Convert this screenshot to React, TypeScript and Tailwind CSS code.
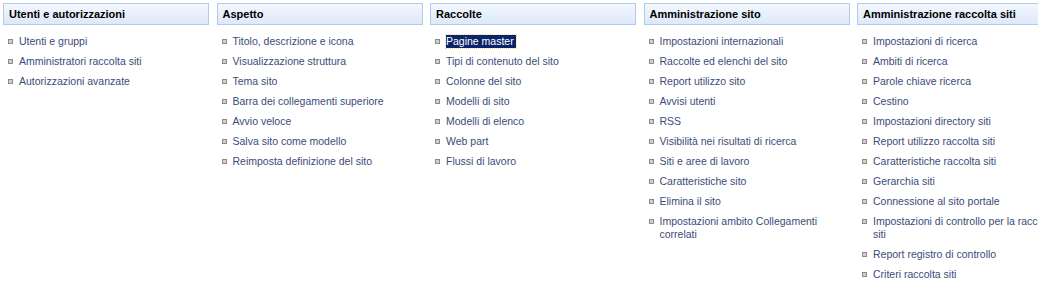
const sections: { title: string; links: string[] }[] = [
  {
    title: "Utenti e autorizzazioni",
    links: ["Utenti e gruppi", "Amministratori raccolta siti", "Autorizzazioni avanzate"],
  },
  {
    title: "Aspetto",
    links: [
      "Titolo, descrizione e icona",
      "Visualizzazione struttura",
      "Tema sito",
      "Barra dei collegamenti superiore",
      "Avvio veloce",
      "Salva sito come modello",
      "Reimposta definizione del sito",
    ],
  },
  {
    title: "Raccolte",
    links: [
      "Pagine master",
      "Tipi di contenuto del sito",
      "Colonne del sito",
      "Modelli di sito",
      "Modelli di elenco",
      "Web part",
      "Flussi di lavoro",
    ],
  },
  {
    title: "Amministrazione sito",
    links: [
      "Impostazioni internazionali",
      "Raccolte ed elenchi del sito",
      "Report utilizzo sito",
      "Avvisi utenti",
      "RSS",
      "Visibilità nei risultati di ricerca",
      "Siti e aree di lavoro",
      "Caratteristiche sito",
      "Elimina il sito",
      "Impostazioni ambito Collegamenti correlati",
    ],
  },
  {
    title: "Amministrazione raccolta siti",
    links: [
      "Impostazioni di ricerca",
      "Ambiti di ricerca",
      "Parole chiave ricerca",
      "Cestino",
      "Impostazioni directory siti",
      "Report utilizzo raccolta siti",
      "Caratteristiche raccolta siti",
      "Gerarchia siti",
      "Connessione al sito portale",
      "Impostazioni di controllo per la raccolta siti",
      "Report registro di controllo",
      "Criteri raccolta siti",
    ],
  },
];

function Section({ title, links }: { title: string; links: string[] }) {
  return (
    <div className="w-[206px] shrink-0">
      <div className="h-[22px] border border-[#b2cbea] bg-gradient-to-b from-[#f2f7fd] to-[#dde9f9] pl-[5px] flex items-center">
        <span className="font-bold text-black text-[11px]">{title}</span>
      </div>
      <ul className="mt-[6px] pl-[5px] text-[10.5px]">
        {links.map((l) => (
          <li key={l} className="flex items-start py-[3.5px]">
            <span className="mt-[4px] mr-[6px] w-[5px] h-[5px] shrink-0 border border-[#8c8c8c] bg-[#cfcfcf]" />
            {l === "Pagine master" ? (
              <span className="bg-[#0a246a] text-white leading-[13px] pr-[2px] outline-dotted outline-1 outline-[#f5d48c]">
                {l}
              </span>
            ) : (
              <span className="text-[#3b4c78] leading-[13px]">{l}</span>
            )}
          </li>
        ))}
      </ul>
    </div>
  );
}

export default function App() {
  return (
    <div
      className="w-[1038px] h-[297px] overflow-hidden bg-white text-[11px]"
      style={{ fontFamily: "Tahoma, 'Liberation Sans', sans-serif" }}
    >
      <div className="flex gap-[7.5px] pl-[3px] pt-[3px]">
        {sections.map((s) => (
          <Section key={s.title} title={s.title} links={s.links} />
        ))}
      </div>
    </div>
  );
}
